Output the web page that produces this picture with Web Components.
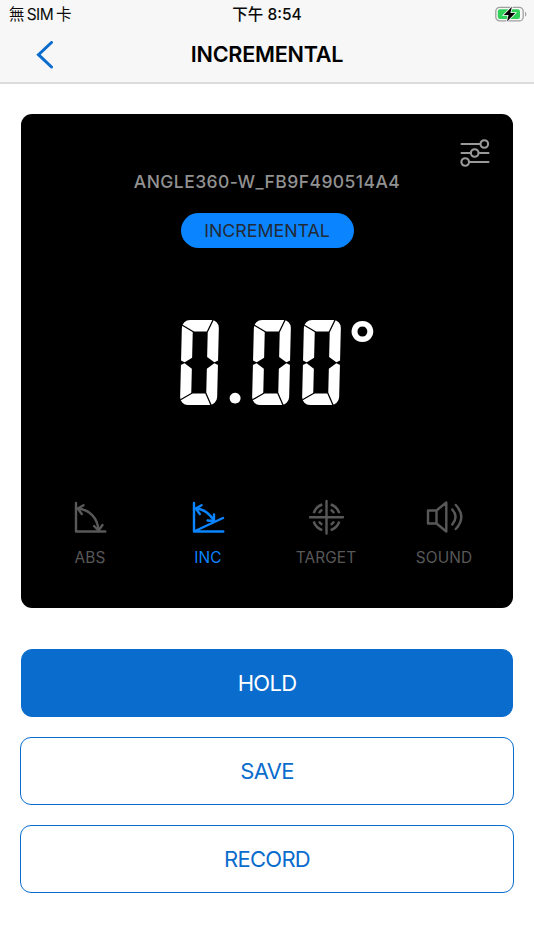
<!DOCTYPE html>
<html lang="zh-Hant">
<head>
<meta charset="utf-8">
<title>Incremental</title>
<style>
  body {
    margin: 0;
    background: #fff;
    font-family: Inter, "Noto Sans CJK TC", sans-serif;
  }
</style>
</head>
<body>
<angle-app></angle-app>

<script>
class StatusBar extends HTMLElement {
  constructor() {
    super();
    this.attachShadow({mode: "open"}).innerHTML = `
      <style>
        :host {
          display: grid;
          grid-template-columns: 1fr auto 1fr;
          align-items: center;
          height: 28px;
          padding: 0 7px 0 9px;
          font-size: 15.5px;
          line-height: 29px;
          color: #0a0a0a;
        }
        .carrier { letter-spacing: -.5px; word-spacing: -1.2px; }
        .time { font-weight: 500; letter-spacing: 0; margin-right: 2px; }
        svg { justify-self: end; margin-top: -2px; }
      </style>
      <span class="carrier">無 SIM 卡</span>
      <span class="time">下午 8:54</span>
      <svg width="32" height="18" viewBox="0 0 32 18">
        <rect x=".8" y="2.3" width="27.4" height="13.6" rx="4" fill="none" stroke="#a0a0a0" stroke-width="1.3"/>
        <path d="M30 6.8v4.8c1.8-.6 1.8-4.2 0-4.8z" fill="#a0a0a0"/>
        <rect x="2.8" y="4.3" width="22.2" height="9.6" rx="2.2" fill="#30d158"/>
        <path d="M16.9 1.8 8.8 10h4.7l-1.5 6.5 8.2-8.4h-4.8z" fill="#000" stroke="#f7f7f7" stroke-width="1.6" paint-order="stroke"/>
      </svg>
    `;
  }
}
customElements.define("status-bar", StatusBar);

class NavBar extends HTMLElement {
  constructor() {
    super();
    this.attachShadow({mode: "open"}).innerHTML = `
      <style>
        :host {
          display: grid;
          grid-template-columns: 70px 1fr 70px;
          align-items: center;
          height: 54px;
          border-bottom: 2px solid #dcdcdc;
        }
        svg { justify-self: end; margin-right: 16px; }
        h1 {
          margin: 0 0 2px;
          text-align: center;
          font-size: 21.6px;
          font-weight: 600;
          letter-spacing: -.25px;
          color: #000;
        }
      </style>
      <svg width="18" height="28" viewBox="0 0 18 28">
        <path d="M15.5 1.5 2.5 13.7l13 12.3" fill="none" stroke="#0a6ccd" stroke-width="3" stroke-linecap="round"/>
      </svg>
      <h1><slot></slot></h1>
    `;
  }
}
customElements.define("nav-bar", NavBar);

// one LCD digit: a square-shouldered frame behind the glyph, the gaps laid over it
class LcdDigit extends HTMLElement {
  constructor() {
    super();
    this.attachShadow({mode: "open"}).innerHTML = `
      <style>
        :host {
          display: grid;
          box-sizing: border-box;
          width: 37px;
          height: 85px;
          transform: skewX(-1.4deg);
        }
        .frame, .glyph, svg { grid-area: 1 / 1; }
        .frame { border: 11px solid currentColor; border-radius: 8px; }
        .glyph {
          justify-self: center;
          margin: 0 -20px;
          font: 900 112px/85px Roboto, sans-serif;
          transform: scaleX(.56);
        }
        svg { position: relative; }
      </style>
      <div class="frame"></div>
      <span class="glyph"><slot></slot></span>
      <svg width="37" height="85" viewBox="0 0 37 85">
        <path d="M11 11.5h15V37l8 5.7-8 6V73.500H11V48.700L3 42.700l8-5z" fill="#000"/>
        <path d="M0 40.5 4.5 42.700 0 45zM37 40.500l-4.500 2.200L37 45z" fill="#000"/>
        <path d="M0 5 12 12M31 0l-5.500 12M0 80l12-7M31.500 86l-6-13" stroke="#000" stroke-width="1.3"/>
      </svg>
    `;
  }
}
customElements.define("lcd-digit", LcdDigit);

const ICONS = {
  abs: `<path d="M3 3v28.500H32.300"/><path d="M5 8.500C16.500 9.500 24.500 18 25.500 30"/><path d="M10.500 5.200 4.800 8.500l4 5.500M21 26l4.500 4.500 4-5.500"/>`,
  inc: `<path d="M3 3v28.500H32.300M3 31.500 32 18"/><path d="M5 8.500c7.500.5 13.500 5 18 12"/><path d="M10.500 5.200 4.800 8.500l4 5.500M16.500 20.500l6.500.5V14.500"/>`,
  target: `<path d="M17.500 1v32.500M1 17.300h33"/>
    <path d="M21.700 4.500A13.500 13.500 0 0 1 30.300 13.100M30.300 21.500A13.500 13.500 0 0 1 21.700 30.100M13.300 30.100A13.500 13.500 0 0 1 4.700 21.500M4.700 13.100A13.500 13.500 0 0 1 13.300 4.500" stroke-linecap="butt"/>
    <path d="M21.700 9.800A8.600 8.600 0 0 1 25 13.100M25 21.500A8.600 8.600 0 0 1 21.700 24.800M13.300 24.800A8.600 8.600 0 0 1 10 21.500M10 13.100A8.600 8.600 0 0 1 13.300 9.800" stroke-linecap="butt"/>`,
  sound: `<path d="M9.500 10.500H1v13h8.500zM9.500 10.500 19.300 2.500v29L9.500 23.500"/><path d="M25.300 9.500q6.500 7 0 15M28.800 5q11 12 0 24"/>`
};

class ModeTab extends HTMLElement {
  connectedCallback() {
    this.attachShadow({mode: "open"}).innerHTML = `
      <style>
        :host {
          display: flex;
          flex-direction: column;
          align-items: center;
          flex: 1;
          color: #585858;
          font-size: 15.4px;
          line-height: 20px;
          gap: 13px;
        }
        :host([active]) { color: #0a84ff; }
        svg {
          overflow: visible;
          fill: none;
          stroke: currentColor;
          stroke-width: 2.4;
          stroke-linecap: round;
          stroke-linejoin: round;
        }
        span { letter-spacing: .1px; }
      </style>
      <svg width="35" height="35" viewBox="0 0 35 35">${ICONS[this.getAttribute("icon")]}</svg>
      <span><slot></slot></span>
    `;
  }
}
customElements.define("mode-tab", ModeTab);

class AnglePanel extends HTMLElement {
  constructor() {
    super();
    this.attachShadow({mode: "open"}).innerHTML = `
      <style>
        :host {
          display: flex;
          flex-direction: column;
          align-items: center;
          box-sizing: border-box;
          height: 494px;
          border-radius: 11px;
          background: #000;
        }
        .settings { align-self: flex-end; margin: 24px 23.5px 0 0; }
        .device {
          margin-top: 2px;
          font-size: 17.5px;
          font-weight: 500;
          line-height: 24px;
          letter-spacing: .43px;
          color: #929292;
        }
        .mode {
          box-sizing: border-box;
          width: 173px;
          height: 35px;
          margin-top: 19px;
          border-radius: 18px;
          background: #0a84ff;
          text-align: center;
          font-size: 17.8px;
          line-height: 35px;
          color: #222a35;
        }
        .reading {
          display: flex;
          height: 85px;
          margin: 71.5px 0 0 26px;
          color: #fff;
        }
        .dot {
          width: 35px;
          text-align: center;
          font: 900 66px/115px Lato, sans-serif;
        }
        .degree {
          width: 34px;
          margin-left: 6px;
          text-align: center;
          font: 900 61px/46px Lato, sans-serif;
        }
        lcd-digit + lcd-digit { margin-left: 13px; }
        .tabs {
          display: flex;
          align-self: stretch;
          margin: 95.5px 10px 0;
        }
      </style>
      <svg class="settings" width="30" height="30" viewBox="0 0 30 30" fill="none" stroke="#9a9a9a" stroke-width="2.1" stroke-linecap="round">
        <path d="M1.5 6h18.500M1.500 15h9M19.500 15h9M9.500 24h19"/>
        <circle cx="24.3" cy="6" r="3.8"/><circle cx="14.7" cy="15" r="3.8"/><circle cx="5.2" cy="24" r="3.8"/>
      </svg>
      <div class="device"><slot name="device"></slot></div>
      <div class="mode"><slot name="mode"></slot></div>
      <div class="reading"><lcd-digit>0</lcd-digit><span class="dot">.</span><lcd-digit>0</lcd-digit><lcd-digit>0</lcd-digit><span class="degree">°</span></div>
      <div class="tabs"><slot></slot></div>
    `;
  }
}
customElements.define("angle-panel", AnglePanel);

class ActionButton extends HTMLElement {
  constructor() {
    super();
    this.attachShadow({mode: "open"}).innerHTML = `
      <style>
        :host { display: block; }
        button {
          display: block;
          width: 100%;
          height: 68px;
          padding: 0;
          border: 1.5px solid #0a6ccd;
          border-radius: 11px;
          background: #fff;
          color: #0a6ccd;
          font: 400 22px Inter, sans-serif;
          letter-spacing: -.7px;
        }
        :host([primary]) { padding: 0 .7px; }
        :host([primary]) button { background: #0a6ccd; color: #fff; }
      </style>
      <button><slot></slot></button>
    `;
  }
}
customElements.define("action-button", ActionButton);

class AngleApp extends HTMLElement {
  constructor() {
    super();
    this.attachShadow({mode: "open"}).innerHTML = `
      <style>
        :host { display: block; height: 950px; overflow: hidden; }
        header { background: #f7f7f7; }
        main { padding: 30px 21px 0; }
        .actions {
          display: flex;
          flex-direction: column;
          gap: 20px;
          margin: 41px -1px 0;
        }
      </style>
      <header>
        <status-bar></status-bar>
        <nav-bar>INCREMENTAL</nav-bar>
      </header>
      <main>
        <angle-panel>
          <span slot="device">ANGLE360-W_FB9F490514A4</span>
          <span slot="mode">INCREMENTAL</span>
          <mode-tab icon="abs">ABS</mode-tab>
          <mode-tab icon="inc" active>INC</mode-tab>
          <mode-tab icon="target">TARGET</mode-tab>
          <mode-tab icon="sound">SOUND</mode-tab>
        </angle-panel>
        <div class="actions">
          <action-button primary>HOLD</action-button>
          <action-button>SAVE</action-button>
          <action-button>RECORD</action-button>
        </div>
      </main>
    `;
  }
}
customElements.define("angle-app", AngleApp);
</script>
</body>
</html>
